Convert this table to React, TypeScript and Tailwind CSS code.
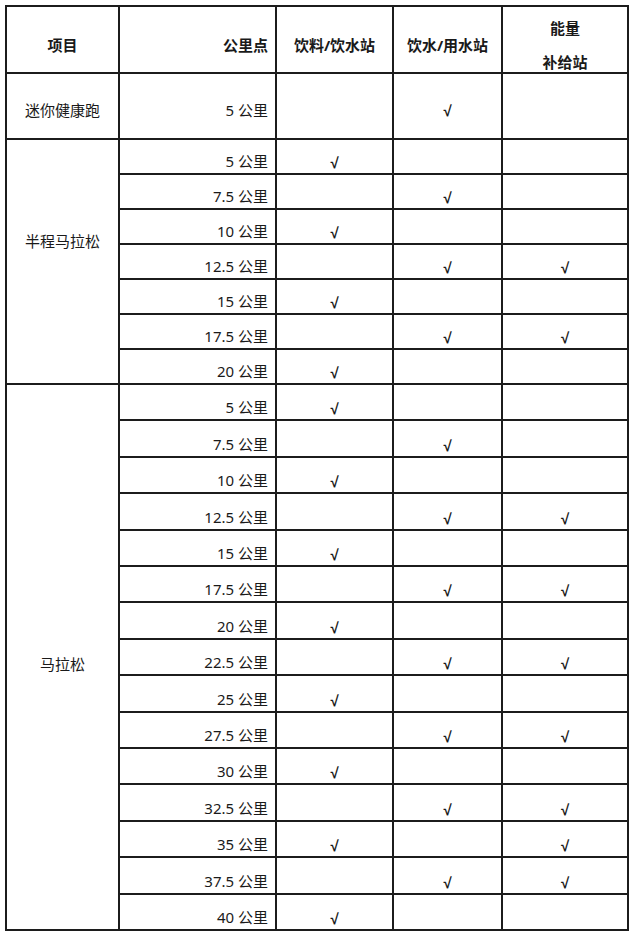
type Stop = { km: string; drink?: boolean; water?: boolean; energy?: boolean };

const halfStops: Stop[] = [
  { km: "5", drink: true },
  { km: "7.5", water: true },
  { km: "10", drink: true },
  { km: "12.5", water: true, energy: true },
  { km: "15", drink: true },
  { km: "17.5", water: true, energy: true },
  { km: "20", drink: true },
];

const fullStops: Stop[] = [
  { km: "5", drink: true },
  { km: "7.5", water: true },
  { km: "10", drink: true },
  { km: "12.5", water: true, energy: true },
  { km: "15", drink: true },
  { km: "17.5", water: true, energy: true },
  { km: "20", drink: true },
  { km: "22.5", water: true, energy: true },
  { km: "25", drink: true },
  { km: "27.5", water: true, energy: true },
  { km: "30", drink: true },
  { km: "32.5", water: true, energy: true },
  { km: "35", drink: true, energy: true },
  { km: "37.5", water: true, energy: true },
  { km: "40", drink: true },
];

// radical sign as used in the source doc for "yes"
function Tick() {
  return (
    <span
      className="text-[15px] leading-[20px] font-bold"
      style={{ fontFamily: '"Liberation Sans", Arial, sans-serif' }}
    >
      √
    </span>
  );
}

function StopRow({ stop }: { stop: Stop }) {
  return (
    <>
      <div className="flex items-end justify-end bg-white pr-[7px] pb-[2px]">
        {stop.km} 公里
      </div>
      <div className="flex items-end justify-center bg-white">
        {stop.drink && <Tick />}
      </div>
      <div className="flex items-end justify-center bg-white">
        {stop.water && <Tick />}
      </div>
      <div className="flex items-end justify-center bg-white">
        {stop.energy && <Tick />}
      </div>
    </>
  );
}

export default function App() {
  return (
    <div
      className="min-h-[937px] bg-white pt-[5px] pl-[5px] text-[15px] leading-[20px] text-[#1a1a1a]"
      style={{ fontFamily: '"Noto Sans", "Noto Sans CJK SC", sans-serif' }}
    >
      <div className="grid w-[624px] grid-cols-[111px_155px_115px_107px_124px] grid-rows-[65px_64px_repeat(7,33px)_34px_35px_34px_35px_34px_34px_35px_34px_35px_34px_34px_35px_34px_35px_34px] gap-[2px] bg-[#1c1c1c] p-[2px]">
        {/* Header */}
        <div className="flex items-end justify-center bg-white pb-[17px] font-bold">
          项目
        </div>
        <div className="flex items-end justify-end bg-white pr-[7px] pb-[17px] font-bold">
          公里点
        </div>
        <div className="flex items-end justify-center bg-white pb-[17px] font-bold">
          饮料/饮水站
        </div>
        <div className="flex items-end justify-center bg-white pb-[17px] font-bold">
          饮水/用水站
        </div>
        <div className="flex flex-col items-center bg-white pt-[11px] font-bold">
          <span>能量</span>
          <span className="mt-[14px]">补给站</span>
        </div>

        {/* 迷你健康跑 */}
        <div className="flex items-end justify-center bg-white pb-[18px]">
          迷你健康跑
        </div>
        <div className="flex items-end justify-end bg-white pr-[7px] pb-[18px]">
          5 公里
        </div>
        <div className="bg-white" />
        <div className="flex items-end justify-center bg-white pb-[17px]">
          <Tick />
        </div>
        <div className="bg-white" />

        {/* 半程马拉松 */}
        <div className="row-span-7 flex justify-center bg-white pt-[91px]">
          半程马拉松
        </div>
        {halfStops.map((s) => (
          <StopRow key={"h" + s.km} stop={s} />
        ))}

        {/* 马拉松 */}
        <div className="row-span-15 flex justify-center bg-white pt-[269px]">
          马拉松
        </div>
        {fullStops.map((s) => (
          <StopRow key={"f" + s.km} stop={s} />
        ))}
      </div>
    </div>
  );
}
